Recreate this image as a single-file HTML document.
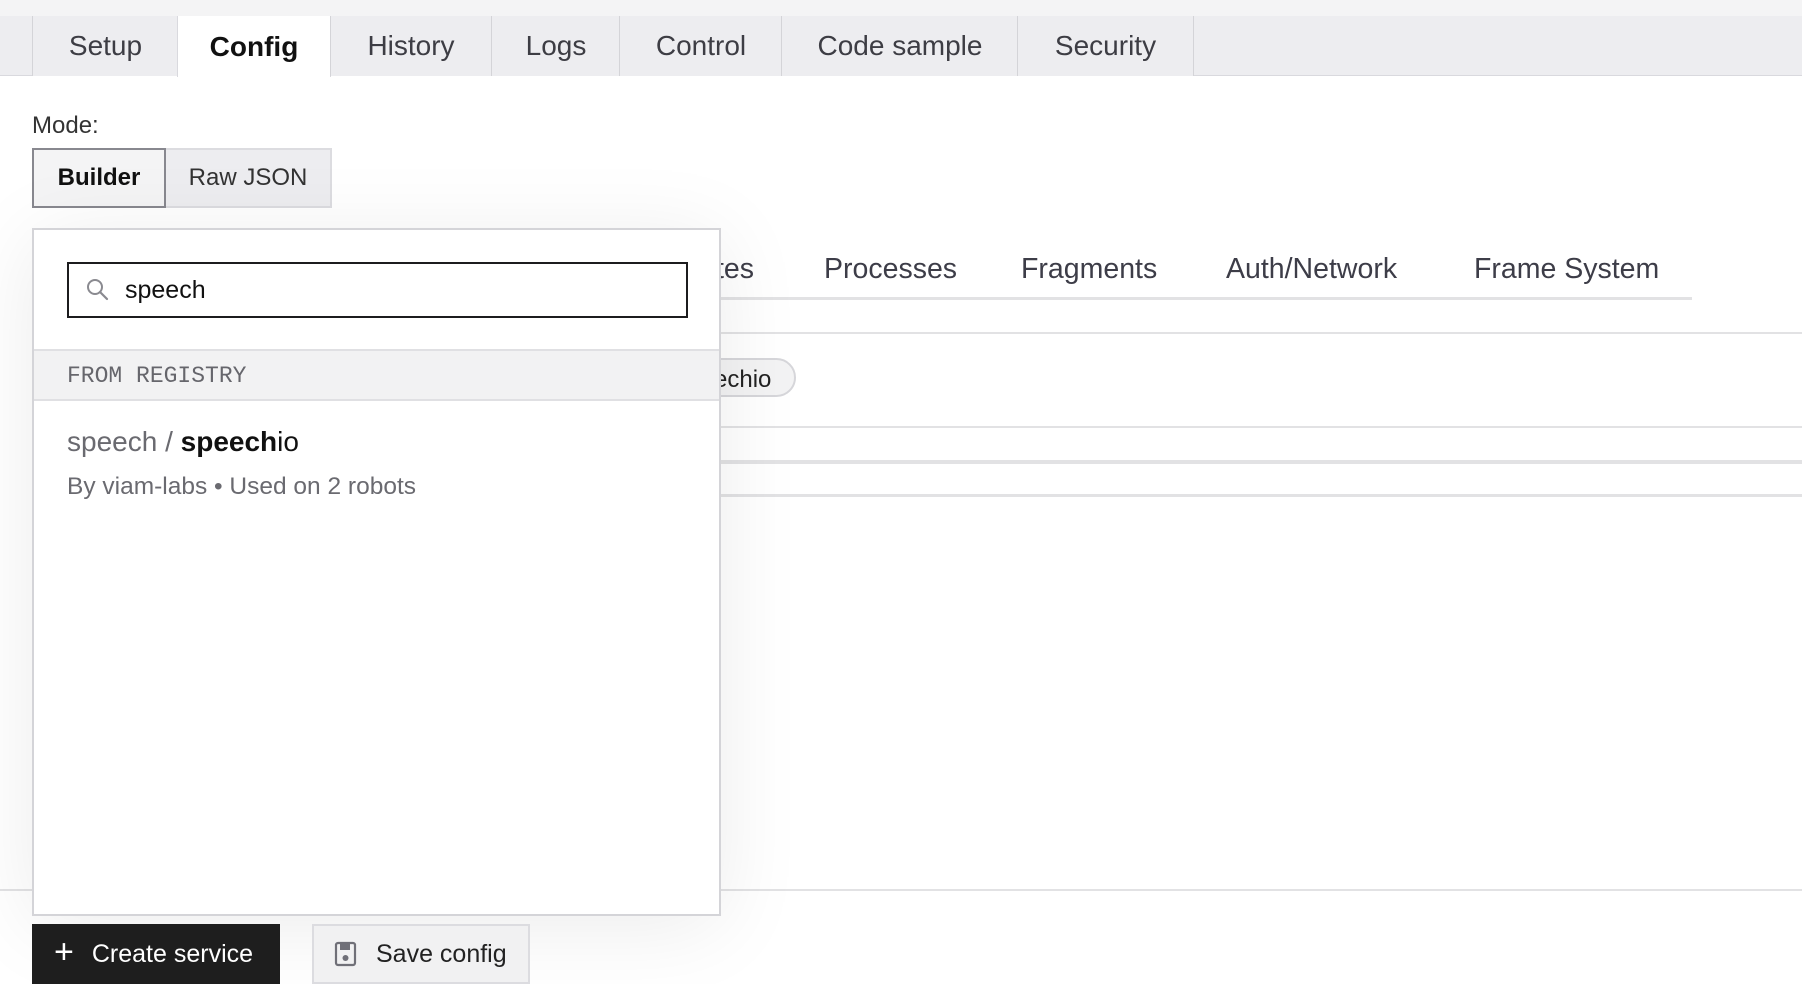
<!DOCTYPE html>
<html><head><meta charset="utf-8"><style>
*{box-sizing:border-box;margin:0;padding:0}
body{width:1802px;height:980px;overflow:hidden;background:#fff;font-family:"Liberation Sans",sans-serif;color:#282829;position:relative}
.abs{position:absolute}
.top{left:0;top:0;width:1802px;height:16px;background:#f4f4f5}
.tabbar{left:0;top:16px;width:1802px;height:60px;background:#ededf0;border-bottom:1px solid #d9d9de}
.tab{position:absolute;top:16px;height:60px;border-left:1px solid #d4d4d8;font-size:28px;color:#3d3d44;display:flex;align-items:center;justify-content:center;background:#ededf0}
.tab.act{background:#fff;color:#111;font-weight:bold;height:61px;border-left:1px solid #d9d9de;border-right:1px solid #d9d9de}
.t2{position:absolute;top:253px;font-size:28.5px;color:#3d3d48}
.hl{position:absolute;height:2px;background:#e2e2e4}
.btn{position:absolute;display:flex;align-items:center;justify-content:center;font-size:25px}
</style></head><body>
<div class="abs top"></div>
<div class="abs tabbar"></div>
<div class="tab" style="left:32px;width:146px">Setup</div>
<div class="tab act" style="left:177px;width:154px">Config</div>
<div class="tab" style="left:330px;width:161px">History</div>
<div class="tab" style="left:491px;width:129px">Logs</div>
<div class="tab" style="left:619px;width:163px">Control</div>
<div class="tab" style="left:781px;width:237px">Code sample</div>
<div class="tab" style="left:1017px;width:177px;border-right:1px solid #d4d4d8">Security</div>

<div class="abs" style="left:32px;top:112px;font-size:24px;color:#333">Mode:</div>
<div class="btn" style="left:32px;top:148px;width:134px;height:60px;background:#f4f4f5;border:2px solid #88888f;font-weight:bold;color:#111;font-size:24px">Builder</div>
<div class="btn" style="left:166px;top:148px;width:166px;height:60px;background:#ededf0;border:2px solid #dcdce0;border-left:none;color:#333;font-size:24px">Raw JSON</div>

<div class="t2" style="left:716px">tes</div>
<div class="t2" style="left:824px">Processes</div>
<div class="t2" style="left:1021px">Fragments</div>
<div class="t2" style="left:1226px">Auth/Network</div>
<div class="t2" style="left:1474px">Frame System</div>
<div class="hl" style="left:700px;top:297px;width:992px;height:3px"></div>
<div class="hl" style="left:700px;top:332px;width:1102px"></div>
<div class="abs" style="left:640px;top:358px;width:156px;height:39px;border:2px solid #d6d6da;border-radius:20px;background:#f3f3f4;font-size:24px;padding:6px 0 0 72px;color:#222">echio</div>
<div class="hl" style="left:700px;top:426px;width:1102px"></div>
<div class="hl" style="left:700px;top:460px;width:1102px;height:4px"></div>
<div class="hl" style="left:700px;top:494px;width:1102px;height:3px"></div>
<div class="hl" style="left:0;top:889px;width:1802px"></div>

<div class="abs" style="left:32px;top:228px;width:689px;height:688px;background:#fff;border:2px solid #d4d4d8;box-shadow:0 10px 80px rgba(0,0,0,0.08)">
  <div class="abs" style="left:33px;top:32px;width:621px;height:56px;border:2px solid #1c1c1e;background:#fff">
    <svg class="abs" style="left:16px;top:13px" width="26" height="26" viewBox="0 0 26 26"><circle cx="10" cy="10" r="7" fill="none" stroke="#8a8a90" stroke-width="2"/><path d="M15 15l7 7" stroke="#8a8a90" stroke-width="2.2" stroke-linecap="round"/></svg>
    <div class="abs" style="left:56px;top:12px;font-size:25px;color:#111">speech</div>
  </div>
  <div class="abs" style="left:0;top:119px;width:685px;height:52px;background:#f2f2f3;border-top:2px solid #e0e0e3;border-bottom:2px solid #e0e0e3;font-family:'Liberation Mono',monospace;font-size:23px;color:#66666c;padding:12px 0 0 33px">FROM REGISTRY</div>
  <div class="abs" style="left:33px;top:196px;font-size:28px;color:#6a6a70">speech / <b style="color:#111">speech</b><span style="color:#111">io</span></div>
  <div class="abs" style="left:33px;top:243px;font-size:24.5px;color:#6a6a70">By viam-labs • Used on 2 robots</div>
</div>

<div class="btn" style="left:32px;top:924px;width:248px;height:60px;background:#1e1e1e;color:#fff;justify-content:flex-start;padding-left:22px"><span style="font-size:34px;font-weight:300;margin-right:18px;margin-top:-4px">+</span>Create service</div>
<div class="btn" style="left:312px;top:924px;width:218px;height:60px;background:#f1f1f2;border:2px solid #dcdce0;color:#222;justify-content:flex-start;padding-left:20px">
<svg width="24" height="26" viewBox="0 0 24 26" style="margin-right:18px"><rect x="2" y="2" width="19" height="22" rx="2" fill="none" stroke="#707078" stroke-width="2.2"/><rect x="6" y="3" width="10" height="6" fill="#707078"/><circle cx="11.5" cy="17" r="3" fill="#707078"/></svg>Save config</div>
</body></html>
